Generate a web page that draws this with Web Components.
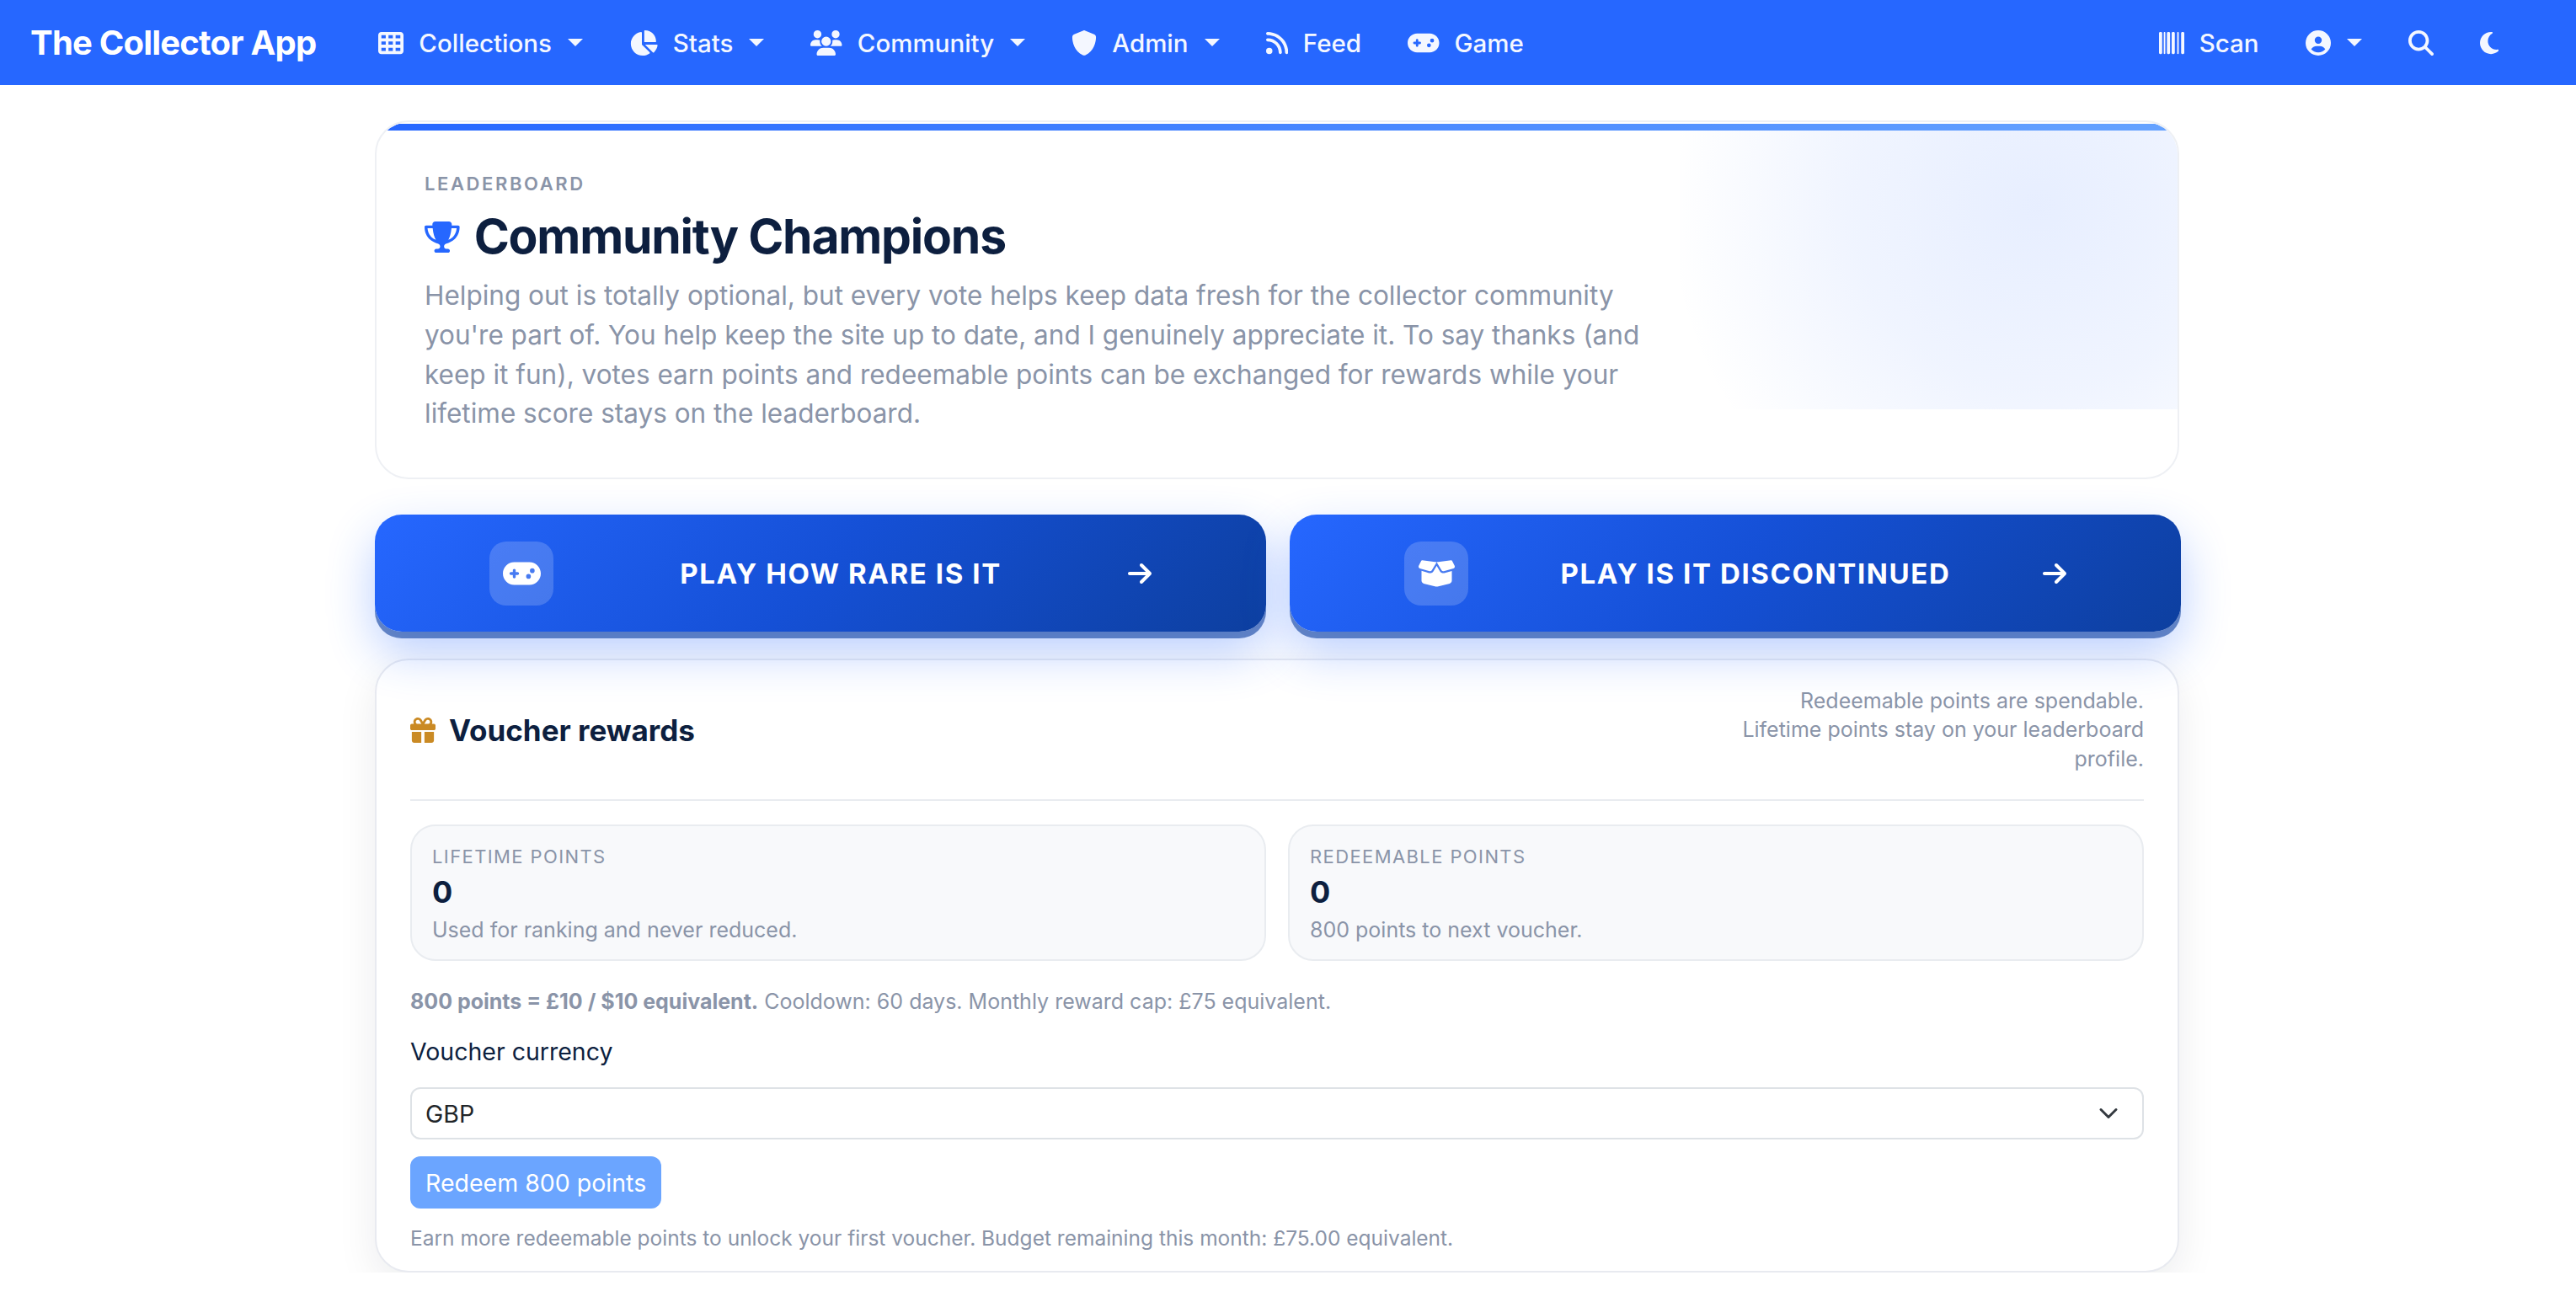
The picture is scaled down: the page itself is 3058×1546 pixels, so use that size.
<!DOCTYPE html>
<html lang="en">
<head>
<meta charset="utf-8">
<title>The Collector App</title>
<style>
  html, body { margin: 0; background: #fff; }
  body { font-family: Inter, "Liberation Sans", sans-serif; color: #0d1f3f; }
</style>
</head>
<body>
<app-navbar></app-navbar>
<page-main>
  <hero-card></hero-card>
  <game-row>
    <game-button icon="gamepad" label="Play How Rare Is It"></game-button>
    <game-button icon="box" label="Play Is It Discontinued"></game-button>
  </game-row>
  <voucher-panel></voucher-panel>
</page-main>

<script>
const ICONS = {
  table: [512, "M64 32C28.7 32 0 60.7 0 96V416c0 35.3 28.7 64 64 64H448c35.3 0 64-28.7 64-64V96c0-35.3-28.7-64-64-64H64zm88 64v64H64V96h88zm56 0h88v64H208V96zm240 0v64H352V96h96zM64 224h88v64H64V224zm232 0v64H208V224h88zm56 0h96v64H352V224zM152 352v64H64V352h88zm56 0h88v64H208V352zm240 0v64H352V352h96z"],
  pie: [576, "M304 240V16.6c0-9 7-16.6 16-16.6C443.7 0 544 100.3 544 224c0 9-7.6 16-16.6 16H304zM32 272C32 150.7 122.1 50.3 239 34.3c9.2-1.3 17 6.1 17 15.4V288L412.5 444.5c6.7 6.7 6.2 17.7-1.5 23.1C371.8 495.6 323.8 512 272 512C139.5 512 32 404.6 32 272zm526.4 16c9.3 0 16.6 7.8 15.4 17c-7.7 55.9-34.6 105.6-73.9 142.3c-6 5.6-15.4 5.2-21.2-.7L320 288H558.4z"],
  users: [640, "M144 0a80 80 0 1 1 0 160A80 80 0 1 1 144 0zM512 0a80 80 0 1 1 0 160A80 80 0 1 1 512 0zM0 298.7C0 239.8 47.8 192 106.7 192h42.7c15.9 0 31 3.5 44.6 9.7c-1.3 7.2-1.9 14.7-1.9 22.3c0 38.2 16.8 72.5 43.3 96c-.2 0-.4 0-.7 0H21.3C9.6 320 0 310.4 0 298.7zM405.3 320c-.2 0-.4 0-.7 0c26.6-23.5 43.3-57.8 43.3-96c0-7.6-.7-15-1.9-22.3c13.6-6.3 28.7-9.7 44.6-9.7h42.7C592.2 192 640 239.8 640 298.7c0 11.8-9.6 21.3-21.3 21.3H405.3zM224 224a96 96 0 1 1 192 0 96 96 0 1 1 -192 0zM128 485.3C128 411.7 187.7 352 261.3 352H378.7C452.3 352 512 411.7 512 485.3c0 14.7-11.9 26.7-26.7 26.7H154.7c-14.7 0-26.7-11.9-26.7-26.7z"],
  shield: [512, "M256 0c4.6 0 9.2 1 13.4 2.9L457.7 82.8c22 9.3 38.4 31 38.3 57.2c-.5 99.2-41.3 280.7-213.6 363.2c-16.7 8-36.1 8-52.8 0C57.3 420.7 16.5 239.2 16 140c-.1-26.2 16.3-47.9 38.3-57.2L242.7 2.9C246.8 1 251.4 0 256 0z"],
  rss: [448, "M0 64C0 46.3 14.3 32 32 32c229.8 0 416 186.2 416 416c0 17.7-14.3 32-32 32s-32-14.3-32-32C384 253.6 226.4 96 32 96C14.3 96 0 81.7 0 64zM0 416a64 64 0 1 1 128 0A64 64 0 1 1 0 416zM32 160c159.1 0 288 128.9 288 288c0 17.7-14.3 32-32 32s-32-14.3-32-32c0-123.7-100.3-224-224-224c-17.7 0-32-14.3-32-32s14.3-32 32-32z"],
  gamepad: [640, "M192 64C86 64 0 150 0 256S86 448 192 448H448c106 0 192-86 192-192s-86-192-192-192H192zM496 168a40 40 0 1 1 0 80 40 40 0 1 1 0-80zM392 304a40 40 0 1 1 80 0 40 40 0 1 1 -80 0zM168 200c0-13.3 10.7-24 24-24s24 10.7 24 24v32h32c13.3 0 24 10.7 24 24s-10.7 24-24 24H216v32c0 13.3-10.7 24-24 24s-24-10.7-24-24V280H136c-13.3 0-24-10.7-24-24s10.7-24 24-24h32V200z"],
  barcode: [512, "M24 32C10.7 32 0 42.7 0 56V456c0 13.3 10.7 24 24 24H40c13.3 0 24-10.7 24-24V56c0-13.3-10.7-24-24-24H24zm88 0c-8.8 0-16 7.2-16 16V464c0 8.8 7.2 16 16 16s16-7.2 16-16V48c0-8.8-7.2-16-16-16zm72 0c-13.3 0-24 10.7-24 24V456c0 13.3 10.7 24 24 24h16c13.3 0 24-10.7 24-24V56c0-13.3-10.7-24-24-24H184zm96 0c-13.3 0-24 10.7-24 24V456c0 13.3 10.7 24 24 24h16c13.3 0 24-10.7 24-24V56c0-13.3-10.7-24-24-24H280zM448 56V456c0 13.3 10.7 24 24 24h16c13.3 0 24-10.7 24-24V56c0-13.3-10.7-24-24-24H472c-13.3 0-24 10.7-24 24zm-64-24c-8.8 0-16 7.2-16 16V464c0 8.8 7.2 16 16 16s16-7.2 16-16V48c0-8.8-7.2-16-16-16z"],
  user: [512, "M399 384.2C376.9 345.8 335.4 320 288 320H224c-47.4 0-88.9 25.8-111 64.2c35.2 39.2 86.2 63.8 143 63.8s107.8-24.7 143-63.8zM0 256a256 256 0 1 1 512 0A256 256 0 1 1 0 256zm256 16a72 72 0 1 0 0-144 72 72 0 1 0 0 144z"],
  search: [512, "M416 208c0 45.9-14.9 88.3-40 122.7L502.6 457.4c12.5 12.5 12.5 32.8 0 45.3s-32.8 12.5-45.3 0L330.7 376c-34.4 25.2-76.8 40-122.7 40C93.1 416 0 322.9 0 208S93.1 0 208 0S416 93.1 416 208zM208 352a144 144 0 1 0 0-288 144 144 0 1 0 0 288z"],
  moon: [384, "M223.5 32C100 32 0 132.3 0 256S100 480 223.5 480c60.6 0 115.5-24.2 155.8-63.4c5-4.9 6.3-12.5 3.1-18.7s-10.1-9.7-17-8.5c-9.8 1.7-19.8 2.6-30.1 2.6c-96.9 0-175.5-78.8-175.5-176c0-65.8 36-123.1 89.3-153.3c6.1-3.5 9.2-10.5 7.7-17.3s-7.3-11.9-14.3-12.5c-6.3-.5-12.6-.8-19-.8z"],
  trophy: [576, "M400 0H176c-26.5 0-48.1 21.8-47.1 48.2c.2 5.3 .4 10.6 .7 15.8H24C10.7 64 0 74.7 0 88c0 92.6 33.5 157 78.5 200.7c44.3 43.1 98.3 64.8 138.1 75.8c23.4 6.5 39.4 26 39.4 45.6c0 20.9-17 37.9-37.9 37.9H192c-17.7 0-32 14.3-32 32s14.3 32 32 32H384c17.7 0 32-14.3 32-32s-14.3-32-32-32H357.9C337 448 320 431 320 410.1c0-19.6 15.9-39.2 39.4-45.6c39.9-11 93.9-32.7 138.2-75.8C542.5 245 576 180.6 576 88c0-13.3-10.7-24-24-24H446.4c.3-5.2 .5-10.4 .7-15.8C448.1 21.8 426.5 0 400 0zM48.9 112h84.4c9.1 90.1 29.2 150.3 51.9 190.6c-24.9-11-50.8-26.5-73.2-48.3c-32-31.1-58-76-63-142.3zM464.1 254.3c-22.4 21.8-48.3 37.3-73.2 48.3c22.7-40.3 42.8-100.5 51.9-190.6h84.4c-5.1 66.3-31.1 111.2-63 142.3z"],
  gift: [512, "M190.5 68.8L225.3 128H224 152c-22.1 0-40-17.9-40-40s17.9-40 40-40h2.2c14.9 0 28.8 7.9 36.3 20.8zM64 88c0 14.4 3.5 28 9.6 40H32c-17.7 0-32 14.3-32 32v64c0 17.7 14.3 32 32 32H480c17.7 0 32-14.3 32-32V160c0-17.7-14.3-32-32-32H438.4c6.1-12 9.6-25.6 9.6-40c0-48.6-39.4-88-88-88h-2.2c-31.9 0-61.5 16.9-77.7 44.4L256 85.5l-24.1-41C215.7 16.9 186.1 0 154.2 0H152C103.4 0 64 39.4 64 88zm336 0c0 22.1-17.9 40-40 40H288h-1.3l34.8-59.2C329.1 55.9 342.9 48 357.8 48H360c22.1 0 40 17.9 40 40zM32 288V464c0 26.5 21.5 48 48 48H224V288H32zM288 512H432c26.5 0 48-21.5 48-48V288H288V512z"],
  box: [640, "M58.9 42.1c3-6.1 9.6-9.6 16.3-8.7L320 64 564.8 33.4c6.7-.8 13.3 2.7 16.3 8.7l41.7 83.4c9 17.9-.6 39.6-19.8 45.1L439.6 217.3c-13.9 4-28.8-1.9-36.2-14.3L320 64 236.6 203c-7.4 12.4-22.3 18.3-36.2 14.3L37.1 170.6c-19.3-5.5-28.8-27.2-19.8-45.1L58.9 42.1zM321.1 128l54.9 91.4c14.9 24.8 44.6 36.6 72.5 28.6L576 211.6v167c0 22-15 41.2-36.4 46.6l-204.1 51c-10.2 2.6-20.9 2.6-31 0l-204.1-51C79 419.7 64 400.5 64 378.5v-167L191.6 248c27.8 8 57.6-3.8 72.5-28.6L318.9 128h2.2z"],
  arrow: [448, "M438.6 278.6c12.5-12.5 12.5-32.8 0-45.3l-160-160c-12.5-12.5-32.8-12.5-45.3 0s-12.5 32.8 0 45.3L338.8 224 32 224c-17.7 0-32 14.3-32 32s14.3 32 32 32l306.7 0L233.4 393.4c-12.5 12.5-12.5 32.8 0 45.3s32.8 12.5 45.3 0l160-160z"],
};

class FaIcon extends HTMLElement {
  constructor() {
    super();
    this.attachShadow({ mode: "open" });
  }

  connectedCallback() {
    const [width, d] = ICONS[this.getAttribute("name")];
    const size = this.getAttribute("size") || 30;
    this.shadowRoot.innerHTML = `
      <style>
        :host { display: inline-flex; flex: none; line-height: 0; color: inherit; }
        svg { fill: currentColor; display: block; }
      </style>
      <svg xmlns="http://www.w3.org/2000/svg" viewBox="0 0 ${width} 512" height="${size}" width="${(size * width) / 512}"><path d="${d}"/></svg>`;
  }
}

class NavItem extends HTMLElement {
  constructor() {
    super();
    this.attachShadow({ mode: "open" });
  }

  connectedCallback() {
    const icon = this.getAttribute("icon");
    const label = this.getAttribute("label");
    const caret = this.hasAttribute("caret");
    this.shadowRoot.innerHTML = `
      <style>
        :host { display: flex; align-items: center; color: #f4f7ff; font-size: 29.5px; font-weight: 500; white-space: nowrap; }
        .label { margin-left: 18px; }
        .caret { width: 0; height: 0; margin-left: 19px; border: 9px solid transparent; border-top-color: currentColor; border-bottom: 0; }
      </style>
      <fa-icon name="${icon}" size="${this.getAttribute("size") || 30}"></fa-icon>
      ${label ? `<span class="label">${label}</span>` : ""}
      ${caret ? `<span class="caret"></span>` : ""}`;
  }
}

class AppNavbar extends HTMLElement {
  constructor() {
    super();
    this.attachShadow({ mode: "open" });
  }

  connectedCallback() {
    this.shadowRoot.innerHTML = `
      <style>
        :host { display: flex; align-items: center; height: 101px; padding: 0 92px 0 36px; background: #2667ff; box-sizing: border-box; }
        .brand { color: #fff; font-size: 40px; font-weight: 700; letter-spacing: -0.8px; margin-right: 74px; white-space: nowrap; }
        .links { display: flex; align-items: center; gap: 55px; }
        .right { display: flex; align-items: center; gap: 55px; margin-left: auto; }
      </style>
      <span class="brand">The Collector App</span>
      <div class="links">
        <nav-item icon="table" label="Collections" caret></nav-item>
        <nav-item icon="pie" label="Stats" caret></nav-item>
        <nav-item icon="users" label="Community" caret></nav-item>
        <nav-item icon="shield" label="Admin" caret></nav-item>
        <nav-item icon="rss" label="Feed"></nav-item>
        <nav-item icon="gamepad" label="Game"></nav-item>
      </div>
      <div class="right">
        <nav-item icon="barcode" label="Scan"></nav-item>
        <nav-item icon="user" caret></nav-item>
        <nav-item icon="search"></nav-item>
        <nav-item icon="moon"></nav-item>
      </div>`;
  }
}

class PageMain extends HTMLElement {
  constructor() {
    super();
    this.attachShadow({ mode: "open" }).innerHTML = `
      <style>
        :host { display: flex; flex-direction: column; width: 2142px; margin-left: 445px; padding-top: 42px; }
      </style>
      <slot></slot>`;
  }
}

class HeroCard extends HTMLElement {
  constructor() {
    super();
    this.attachShadow({ mode: "open" }).innerHTML = `
      <style>
        :host { display: block; position: relative; box-sizing: border-box; height: 426px; padding: 59px 57px 0; background: #fff; border: 2px solid #eef0f4; border-radius: 40px; overflow: hidden; }
        .wrap { position: absolute; inset: 0; border-radius: 38px; overflow: hidden; pointer-events: none; }
        .bar { position: absolute; left: 0; right: 0; top: 2px; height: 8px; background: linear-gradient(90deg, #2667ff, #66a3ff); }
        .glow { position: absolute; left: 1547px; right: 0; top: 10px; height: 331px; background: radial-gradient(circle 440px at 425px 90px, rgba(38,103,255,.11), rgba(38,103,255,.07) 50%, rgba(38,103,255,0)); }
        .eyebrow { position: relative; font-size: 22px; font-weight: 600; letter-spacing: 2.6px; color: #8a94a8; line-height: 28px; }
        h1 { position: relative; display: flex; align-items: center; gap: 17px; margin: 14px 0 0; font-size: 57px; font-weight: 700; letter-spacing: -1.2px; line-height: 70px; color: #0d1f3f; }
        fa-icon { color: #2667ff; }
        p { position: relative; margin: 12px 0 0; width: 1500px; font-size: 31.5px; line-height: 46.8px; color: #8a94a8; }
      </style>
      <div class="wrap"><div class="glow"></div><div class="bar"></div></div>
      <div class="eyebrow">LEADERBOARD</div>
      <h1><fa-icon name="trophy" size="37"></fa-icon>Community Champions</h1>
      <p>Helping out is totally optional, but every vote helps keep data fresh for the collector community you're part of. You help keep the site up to date, and I genuinely appreciate it. To say thanks (and keep it fun), votes earn points and redeemable points can be exchanged for rewards while your lifetime score stays on the leaderboard.</p>`;
  }
}

class GameRow extends HTMLElement {
  constructor() {
    super();
    this.attachShadow({ mode: "open" }).innerHTML = `
      <style>
        :host { display: grid; grid-template-columns: 1058px 1058px; gap: 28px; margin-top: 42px; position: relative; z-index: 1; }
      </style>
      <slot></slot>`;
  }
}

class GameButton extends HTMLElement {
  constructor() {
    super();
    this.attachShadow({ mode: "open" });
  }

  connectedCallback() {
    this.shadowRoot.innerHTML = `
      <style>
        :host { display: flex; align-items: center; justify-content: space-between; box-sizing: border-box; height: 139px; padding: 0 136px; border-radius: 32px; color: #fff; background: linear-gradient(135deg, #2667ff 0%, #1550d6 50%, #0d3f9f 100%); box-shadow: 0 8px 0 rgba(13,63,159,.6), 0 24px 56px rgba(38,103,255,.32); }
        .tile { display: flex; align-items: center; justify-content: center; width: 76px; height: 76px; border-radius: 20px; background: rgba(255,255,255,.18); }
        .label { font-size: 33px; font-weight: 700; letter-spacing: 1.6px; text-transform: uppercase; white-space: nowrap; }
      </style>
      <span class="tile"><fa-icon name="${this.getAttribute("icon")}" size="36"></fa-icon></span>
      <span class="label">${this.getAttribute("label")}</span>
      <fa-icon name="arrow" size="32"></fa-icon>`;
  }
}

class StatTile extends HTMLElement {
  constructor() {
    super();
    this.attachShadow({ mode: "open" });
  }

  connectedCallback() {
    this.shadowRoot.innerHTML = `
      <style>
        :host { display: block; box-sizing: border-box; height: 162px; padding: 22px 24px; background: #f8f9fb; border: 2px solid #e9ecf0; border-radius: 30px; }
        .name { font-size: 22px; letter-spacing: 1.4px; line-height: 28px; color: #8a94a8; text-transform: uppercase; }
        .value { margin-top: 6px; font-size: 36px; font-weight: 700; line-height: 44px; color: #0d1f3f; }
        .note { margin-top: 6px; font-size: 25px; line-height: 34px; color: #8a94a8; }
      </style>
      <div class="name">${this.getAttribute("name")}</div>
      <div class="value">${this.getAttribute("value")}</div>
      <div class="note">${this.getAttribute("note")}</div>`;
  }
}

class VoucherPanel extends HTMLElement {
  constructor() {
    super();
    this.attachShadow({ mode: "open" }).innerHTML = `
      <style>
        :host { display: block; box-sizing: border-box; height: 729px; margin-top: 32px; padding: 0 40px; background: #fff; border: 2px solid #e8eaf0; border-radius: 40px; box-shadow: 0 16px 48px rgba(15,23,42,.08); }
        header { display: flex; align-items: center; justify-content: space-between; height: 167px; border-bottom: 2px solid #e9ecf0; box-sizing: border-box; }
        h2 { display: flex; align-items: center; gap: 16px; margin: 0; font-size: 35px; font-weight: 700; color: #0d1f3f; }
        h2 fa-icon { color: #ca8a24; }
        .aside { width: 500px; font-size: 25px; line-height: 34.6px; text-align: right; color: #8a94a8; }
        .tiles { display: grid; grid-template-columns: 1fr 1fr; gap: 26px; margin-top: 28px; }
        .terms { margin: 30px 0 0; font-size: 25px; line-height: 36px; color: #8a94a8; }
        .terms strong { font-weight: 700; }
        label { display: block; margin-top: 22px; font-size: 28.5px; line-height: 40px; color: #0d1f3f; }
        select { display: block; width: 100%; height: 62px; margin-top: 22px; padding: 0 16px; appearance: none; -webkit-appearance: none; font: 400 28.5px Inter, "Liberation Sans", sans-serif; color: #212529; background: #fff url("data:image/svg+xml,%3Csvg xmlns='http://www.w3.org/2000/svg' viewBox='0 0 16 16'%3E%3Cpath fill='none' stroke='%23343a40' stroke-linecap='round' stroke-linejoin='round' stroke-width='2' d='m2 5 6 6 6-6'/%3E%3C/svg%3E") no-repeat right 24px center / 32px 24px; border: 2px solid #dee2e6; border-radius: 12px; }
        button { display: block; height: 62px; margin-top: 20px; padding: 0 18px; font: 400 28.5px Inter, "Liberation Sans", sans-serif; color: #fff; background: #6ba5ff; border: 0; border-radius: 12px; }
        .foot { margin: 18px 0 0; font-size: 24.5px; line-height: 34px; color: #8a94a8; }
      </style>
      <header>
        <h2><fa-icon name="gift" size="30"></fa-icon>Voucher rewards</h2>
        <div class="aside">Redeemable points are spendable.<br>Lifetime points stay on your leaderboard profile.</div>
      </header>
      <div class="tiles">
        <stat-tile name="Lifetime points" value="0" note="Used for ranking and never reduced."></stat-tile>
        <stat-tile name="Redeemable points" value="0" note="800 points to next voucher."></stat-tile>
      </div>
      <p class="terms"><strong>800 points = £10 / $10 equivalent.</strong> Cooldown: 60 days. Monthly reward cap: £75 equivalent.</p>
      <label for="currency">Voucher currency</label>
      <select id="currency"><option>GBP</option></select>
      <button type="button">Redeem 800 points</button>
      <p class="foot">Earn more redeemable points to unlock your first voucher. Budget remaining this month: £75.00 equivalent.</p>`;
  }
}

customElements.define("fa-icon", FaIcon);
customElements.define("nav-item", NavItem);
customElements.define("app-navbar", AppNavbar);
customElements.define("page-main", PageMain);
customElements.define("hero-card", HeroCard);
customElements.define("game-row", GameRow);
customElements.define("game-button", GameButton);
customElements.define("stat-tile", StatTile);
customElements.define("voucher-panel", VoucherPanel);
</script>
</body>
</html>
